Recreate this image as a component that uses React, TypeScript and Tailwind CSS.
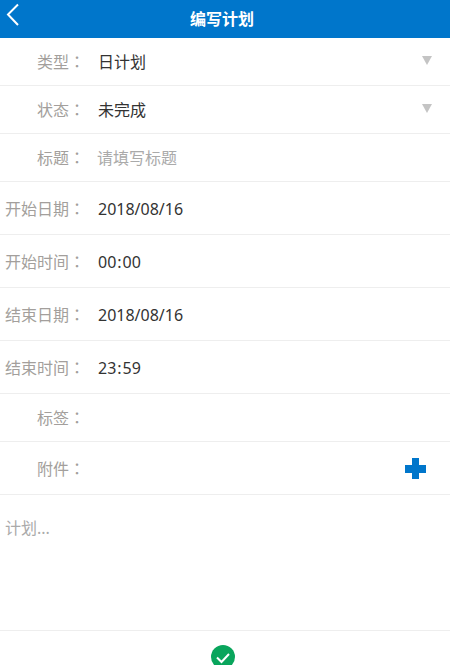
import React from 'react';

const font = { fontFamily: '"Noto Sans", "Noto Sans CJK SC", sans-serif' };

const Row = ({ label, value, tall, arrow, placeholder, plus }: any) => (
    <div className={`flex shrink-0 items-center border-b border-[#eeeeee] ${tall ? 'h-[53px]' : 'h-[48px]'}`}>
        <div className="w-[85px] shrink-0 text-right text-[16px] text-[#a39f9c]">
            {label}
            <span className="font-['Noto_Sans_CJK_TC']">：</span>
        </div>
        {placeholder ? (
            <div className="ml-[12px] pt-[1px] text-[16px] text-[#aaaaaa]">{placeholder}</div>
        ) : (
            <div className={`ml-[13px] text-[16px] text-[#333333] ${tall ? 'pt-[1px]' : ''}`}>{value}</div>
        )}
        {arrow && (
            <div className="mb-[2px] ml-auto mr-[18px] h-0 w-0 border-x-[5px] border-t-[9px] border-x-transparent border-t-[#c4c4c4]"></div>
        )}
        {plus && (
            <svg className="ml-auto mr-[24px]" width="21" height="21" viewBox="0 0 21 21">
                <path d="M7 0h7v7h7v8h-7v6H7v-6H0V7h7z" fill="#0076cb" />
            </svg>
        )}
    </div>
);

const Time = ({ h, m }: any) => (
    <>
        {h}
        <span className="mx-[1px]">:</span>
        {m}
    </>
);

const App = () => {
    return (
        <div style={font} className="flex h-[665px] w-[450px] flex-col overflow-hidden bg-white">
            <div className="relative flex h-[38px] shrink-0 items-center justify-center bg-[#0076cb] pr-[6px]">
                <svg className="absolute left-[6px] top-[3px]" width="14" height="24" viewBox="0 0 14 24" fill="none">
                    <path d="M12 1.500 L2 11.500 L12 22" stroke="white" strokeWidth="2" />
                </svg>
                <span className="text-[16px] font-bold text-white">编写计划</span>
            </div>
            <Row label="类型" value="日计划" arrow />
            <Row label="状态" value="未完成" arrow />
            <Row label="标题" placeholder="请填写标题" />
            <Row label="开始日期" value="2018/08/16" tall />
            <Row label="开始时间" value={<Time h="00" m="00" />} tall />
            <Row label="结束日期" value="2018/08/16" tall />
            <Row label="结束时间" value={<Time h="23" m="59" />} tall />
            <Row label="标签" />
            <Row label="附件" tall plus />
            <div className="h-[136px] shrink-0 border-b border-[#eeeeee] px-[5px] pt-[21px] text-[16px] text-[#aaaaaa]">计划...</div>
            <div className="flex flex-1 justify-center pr-[4px] pt-[14px]">
                <svg className="shrink-0" width="24" height="24" viewBox="0 0 24 24">
                    <circle cx="12" cy="12" r="12" fill="#09a55c" />
                    <path d="M6 12.500 L10.500 17 L18 9" fill="none" stroke="white" strokeWidth="2" />
                </svg>
            </div>
        </div>
    );
};

export default App;
